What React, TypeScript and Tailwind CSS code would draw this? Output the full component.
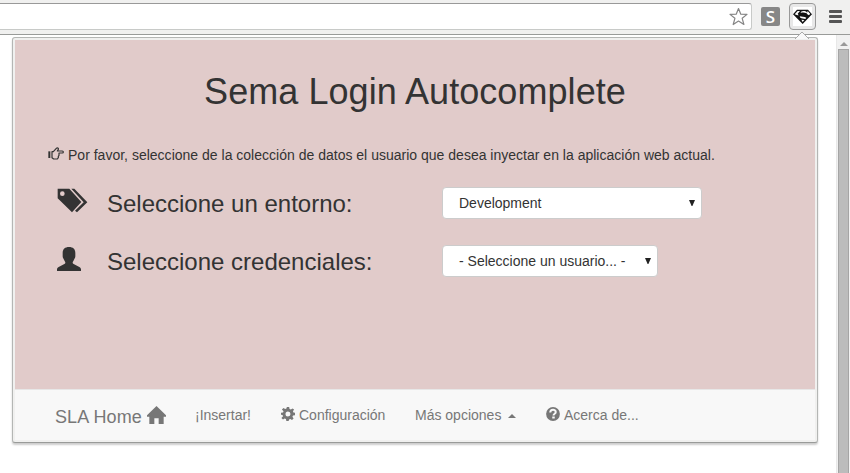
import type { ReactNode } from 'react';

function Star() {
  return (
    <svg width="20" height="20" viewBox="0 0 20 20" fill="#fff" stroke="#858585" strokeWidth="1.2" strokeLinejoin="round">
      <path d="M10.500 1.500l2.300 5.700 6.200.2-4.800 3.900 1.700 6.200-5.400-3.400-5.300 3.400 1.700-6.200L2 7.400l6.200-.2z" />
    </svg>
  );
}

function Shield() {
  return (
    <svg width="19" height="19" viewBox="0 0 57 57">
      <path fill="#fff" d="M0 0h57v57H0z" />
      <path fill="#111" d="M12 8h33l12 14-28 29L0 22z" />
      <path fill="#fff" d="M14 12h7l-7 8 3 5h-3L5 22zM24 14c6-3 14-2 18 2l-1 3c-6-3-13-3-18-1zM44 12l8 9-5 4c-1-2-3-3-6-4zM20 28c6 2 14 1 20 4l-3 4c-5-2-11-2-15-4zM25 38l9 1-5 6z" />
    </svg>
  );
}

function Hand() {
  return (
    <svg className="relative -top-[2px]" width="16" height="13" viewBox="0 0 48 39" fill="none" stroke="#333" strokeWidth="3.6">
      <path fill="#333" stroke="none" d="M1 13h6v20H1z" />
      <path d="M12 14h4L25 4c3-3 7-1 6 3l-3 5h15c4 0 4 6 0 6H33v7l-2 3v4l-3 4H17l-5-4z" strokeLinejoin="round" />
    </svg>
  );
}

function Tags() {
  return (
    <svg width="31" height="25" viewBox="0 0 93 75" fill="#333">
      <path fillRule="evenodd" d="M2 2h35l36 40-28 31L2 31zM16 10a7 7 0 1 0 0 14 7 7 0 0 0 0-14z" />
      <path d="M43 2h9l39 41-31 30-6-5 26-25z" />
    </svg>
  );
}

function User() {
  return (
    <svg className="mt-px" width="24" height="24" viewBox="0 0 72 72" fill="#333">
      <path d="M36 0C24 0 17 6 17 18v10c0 4 2 7 4 10 2 4 4 6 4 9 0 2-1 3-3 4L5 60c-3 2-5 4-5 7v5h72v-5c0-3-2-5-5-7l-17-9c-2-1-3-2-3-4 0-3 2-5 4-9 2-3 4-6 4-10V18C55 6 48 0 36 0z" />
    </svg>
  );
}

function House() {
  return (
    <svg width="19" height="19" viewBox="0 0 57 57" fill="#777">
      <path d="M28.500 0L57 28v4h-7v22H35V37H22v17H7V32H0v-4z" />
    </svg>
  );
}

function Gear() {
  return (
    <svg width="14" height="14" viewBox="0 0 28 28" fill="#777">
      <path fillRule="evenodd" d="M11.700 0h4.600l.8 4 2.600 1.100L23 2.800 26.200 5l-2.300 3.400 1 2.500 3.100.8v4.600l-4 .8-1.100 2.600 2.300 3.300-3.200 3.200-3.300-2.300-2.600 1.100-.8 3h-4.600l-.8-4-2.600-1.100L4 25.200.800 22l3.300-3.300L3 16.100l-3-.8v-3.600l4-.8 1.100-2.600L1.800 5 5 1.800l3.300 2.300L10.900 3zM14 9a5 5 0 1 0 0 10 5 5 0 0 0 0-10z" />
    </svg>
  );
}

function Help() {
  return (
    <svg width="14" height="14" viewBox="0 0 28 28">
      <circle cx="14" cy="14" r="13.800" fill="#777" />
      <path fill="none" stroke="#f8f8f8" strokeWidth="4" d="M8.500 11c0-7 11-7 11-1 0 4-4.500 3-4.500 7" />
      <path fill="#f8f8f8" d="M12.500 19h5v4h-5z" />
    </svg>
  );
}

function Row({ icon, label, children }: { icon: ReactNode; label: string; children: ReactNode }) {
  return (
    <div className="flex h-[58px] items-start">
      <div className="w-[50px] pt-px">{icon}</div>
      <h3 className="w-[335px] pt-[4px] text-[24px] leading-[26px]">{label}</h3>
      {children}
    </div>
  );
}

function Select({ value, className }: { value: string; className: string }) {
  return (
    <div className={`flex h-8 items-center justify-between rounded-[4px] border border-[#ccc] bg-white pr-[5px] pl-4 text-[14px] ${className}`}>
      <span>{value}</span>
      <svg className="-mt-px" width="8" height="6" viewBox="0 0 8 6" fill="#222"><path d="M1 0h6L4.400 6h-.8z" /></svg>
    </div>
  );
}

export default function App() {
  return (
    <div className="flex h-[473px] w-[850px] flex-col overflow-hidden bg-white font-['Liberation_Sans',Arial,sans-serif] text-[#333]">
      <header className="flex h-[35px] shrink-0 border-b border-[#999b99] bg-[#f0f0ef]">
        <div className="mt-[3px] flex h-[27px] w-[752px] items-center justify-end rounded-r-[3px] border border-l-0 border-[#c8cac8] border-t-[#999] bg-white pr-[3px]">
          <Star />
        </div>
        <div className="mt-[7px] ml-[9px] flex h-[19px] w-[19px] items-center justify-center rounded-[2px] bg-[#878787] font-['Open_Sans',sans-serif] text-[17px] leading-none font-semibold text-white">S</div>
        <div className="mt-[3px] ml-[9px] flex h-[27px] w-[27px] items-center justify-center rounded-[4px] border border-[#999] bg-[#e8e8e8]">
          <Shield />
        </div>
        <div className="mt-[10px] ml-[13px] flex w-[13px] flex-col gap-[2px]">
          <i className="h-[3px] rounded-[1px] bg-[#555]" />
          <i className="h-[3px] rounded-[1px] bg-[#555]" />
          <i className="h-[3px] rounded-[1px] bg-[#555]" />
        </div>
      </header>
      <div className="flex flex-1 justify-between">
        <main className="relative mt-[2px] ml-[12px] h-[406px] w-[806px] rounded-[3px] border border-[#b4b6b4] border-b-[#999b99] bg-[#f0f0ef] p-[2px] shadow-[0_2px_2px_rgba(0,0,0,0.2)]">
          <svg className="absolute -top-[7px] left-[782px]" width="14" height="8" viewBox="0 0 14 8">
            <path d="M0 8L7 1l7 7" fill="#f8f8f8" stroke="#aaa" />
          </svg>
          <section className="h-[349px] bg-[#e1cbca] pt-[32px]">
            <h1 className="text-center text-[36px] leading-[40px] tracking-[0.07px]">Sema Login Autocomplete</h1>
            <p className="mt-[33px] flex h-5 items-center pl-[33px] text-[14px] leading-5">
              <Hand />
              <span className="ml-1 tracking-[0.008px]">Por favor, seleccione de la colección de datos el usuario que desea inyectar en la aplicación web actual.</span>
            </p>
            <div className="mt-[22px] pl-[42px]">
              <Row icon={<Tags />} label="Seleccione un entorno:"><Select value="Development" className="w-[260px]" /></Row>
              <Row icon={<User />} label="Seleccione credenciales:"><Select value="- Seleccione un usuario... -" className="w-[216px]" /></Row>
            </div>
          </section>
          <nav className="flex h-[51px] items-start border-t border-[#e7e7e7] bg-[#f8f8f8] text-[14px] leading-5 text-[#777]">
            <a className="mt-[17px] ml-10 flex w-[140px] text-[18px] leading-5 tracking-[0.1px]">SLA Home<span className="-mt-px ml-[5px]"><House /></span></a>
            <a className="mt-[15px] w-[86px]">¡Insertar!</a>
            <a className="mt-[15px] flex w-[134px]"><span className="mt-[2px] mr-1"><Gear /></span>Configuración</a>
            <a className="mt-[15px] flex w-[131px] items-center">Más opciones<i className="mt-px ml-[7px] border-x-4 border-b-4 border-x-transparent border-b-[#777]" /></a>
            <a className="mt-[15px] flex"><span className="mt-[2px] mr-1"><Help /></span>Acerca de...</a>
          </nav>
        </main>
        <aside className="flex w-[14px] flex-col border-l border-[#e8e8e8] bg-[#f1f1f1] pl-px">
          <div className="flex h-[14px] items-center pt-[3px] pl-[2px]"><i className="border-x-[4px] border-b-[4px] border-x-transparent border-b-[#999]" /></div>
          <div className="w-[11px] flex-1 border border-b-0 border-[#a5a5a5] bg-[#bcbcbc]" />
        </aside>
      </div>
    </div>
  );
}
